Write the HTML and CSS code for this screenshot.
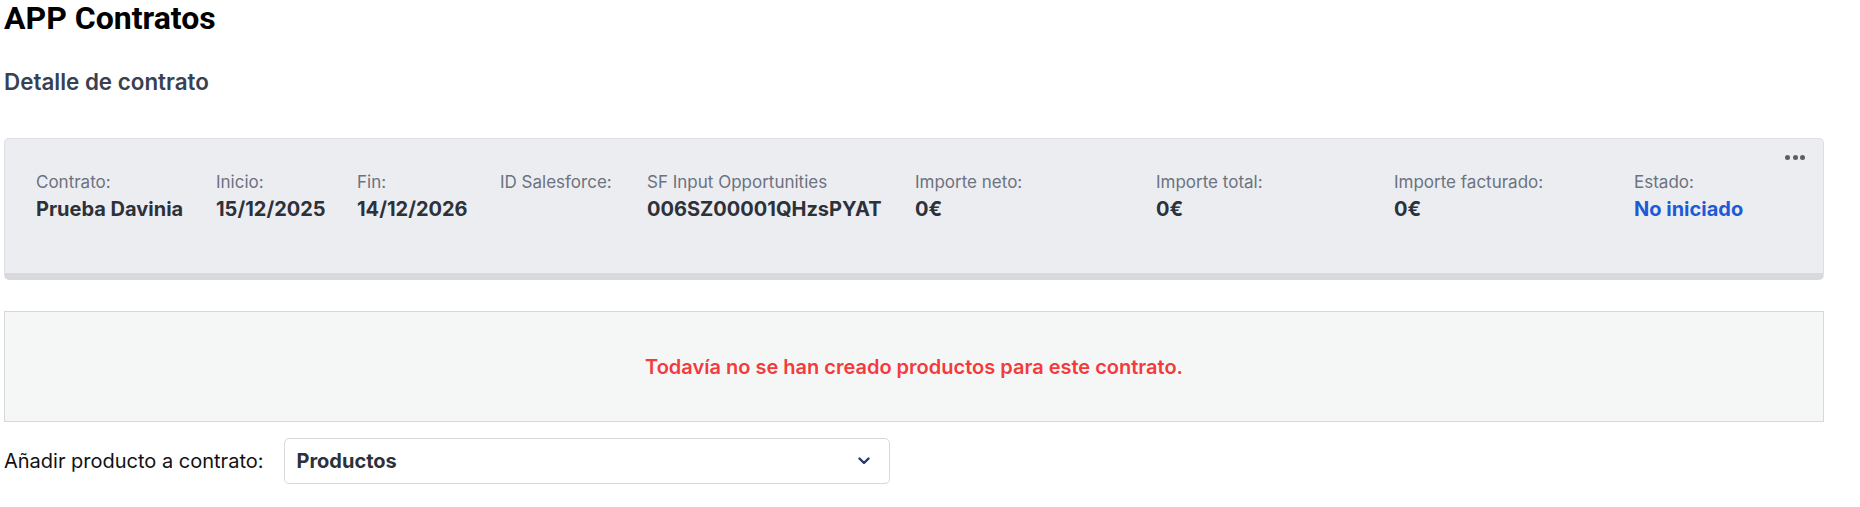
FILE: index.html
```html
<!DOCTYPE html>
<html lang="es">
<head>
<meta charset="utf-8">
<title>APP Contratos</title>
<link rel="stylesheet" href="styles.css">
</head>
<body>
<main class="page">
  <h1 class="app-title">APP Contratos</h1>
  <h2 class="section-title">Detalle de contrato</h2>

  <section class="contract-card">
    <div class="card-menu" aria-label="Más opciones">
      <span class="dot"></span><span class="dot"></span><span class="dot"></span>
    </div>
    <div class="fields">
      <div class="field">
        <div class="field-label">Contrato:</div>
        <div class="field-value">Prueba Davinia</div>
      </div>
      <div class="field">
        <div class="field-label">Inicio:</div>
        <div class="field-value">15/12/2025</div>
      </div>
      <div class="field">
        <div class="field-label">Fin:</div>
        <div class="field-value">14/12/2026</div>
      </div>
      <div class="field">
        <div class="field-label">ID Salesforce:</div>
        <div class="field-value"></div>
      </div>
      <div class="field">
        <div class="field-label">SF Input Opportunities</div>
        <div class="field-value">006SZ00001QHzsPYAT</div>
      </div>
      <div class="field">
        <div class="field-label">Importe neto:</div>
        <div class="field-value">0€</div>
      </div>
      <div class="field">
        <div class="field-label">Importe total:</div>
        <div class="field-value">0€</div>
      </div>
      <div class="field">
        <div class="field-label">Importe facturado:</div>
        <div class="field-value">0€</div>
      </div>
      <div class="field">
        <div class="field-label">Estado:</div>
        <div class="field-value status">No iniciado</div>
      </div>
    </div>
  </section>

  <section class="empty-box">
    <p class="empty-text">Todavía no se han creado productos para este contrato.</p>
  </section>

  <div class="add-row">
    <label class="add-label">Añadir producto a contrato:</label>
    <div class="select-box">
      <span class="select-text">Productos</span>
      <svg class="chevron" width="12" height="8" viewBox="0 0 12 8" aria-hidden="true">
        <path d="M1.5 1.5 L6 6 L10.5 1.5" fill="none" stroke="#2b3768" stroke-width="2.4" stroke-linecap="round" stroke-linejoin="round"/>
      </svg>
    </div>
  </div>
</main>
</body>
</html>
```

FILE: styles.css
```css
* {
  box-sizing: border-box;
}

html, body {
  margin: 0;
  padding: 0;
  background: #ffffff;
}

body {
  font-family: Inter, "Liberation Sans", Arial, sans-serif;
  color: #111111;
}

.page {
  padding: 0 36px 0 4px;
}

.app-title {
  margin: 0;
  font-family: Roboto, "Liberation Sans", Arial, sans-serif;
  font-weight: 700;
  font-size: 32px;
  line-height: 36px;
  color: #000000;
}

.section-title {
  margin: 33px 0 0 0;
  font-family: Inter, "Liberation Sans", Arial, sans-serif;
  font-weight: 600;
  font-size: 22.4px;
  line-height: 26px;
  color: #374151;
}

.contract-card {
  position: relative;
  margin-top: 43px;
  background: #ecedf1;
  border: 1px solid #dcdee3;
  border-bottom: 7px solid #d7d9df;
  border-radius: 5px;
  padding: 32px 31px 51px 31px;
}

.card-menu {
  position: absolute;
  top: 16px;
  right: 18px;
  display: flex;
  gap: 2.5px;
}

.dot {
  width: 5px;
  height: 5px;
  border-radius: 50%;
  background: #5b5f66;
}

.fields {
  display: grid;
  grid-template-columns: 145px 106px 108px 112px 233px 206px 203px 205px 1fr;
  column-gap: 35px;
}

.field-label {
  font-family: Inter, "Liberation Sans", Arial, sans-serif;
  font-weight: 400;
  font-size: 17px;
  line-height: 22px;
  color: #6b7280;
  white-space: nowrap;
}

.field-value {
  margin-top: 4px;
  font-family: Inter, "Liberation Sans", Arial, sans-serif;
  font-weight: 700;
  font-size: 20px;
  line-height: 25px;
  color: #2d3139;
  white-space: nowrap;
  min-height: 25px;
}

.field-value.status {
  color: #1f5ad6;
}

.empty-box {
  margin-top: 31px;
  height: 111px;
  background: #f5f7f7;
  border: 1px solid #d6d8de;
  display: flex;
  align-items: center;
  justify-content: center;
}

.empty-text {
  margin: 0;
  font-family: Inter, "Liberation Sans", Arial, sans-serif;
  font-weight: 600;
  font-size: 20px;
  line-height: 24px;
  color: #f53a3c;
}

.add-row {
  margin-top: 16px;
  display: flex;
  align-items: center;
  gap: 21px;
}

.add-label {
  font-family: Inter, "Liberation Sans", Arial, sans-serif;
  font-weight: 400;
  font-size: 20px;
  line-height: 24px;
  color: #111111;
}

.select-box {
  width: 606px;
  height: 46px;
  border: 1px solid #d6d8de;
  border-radius: 5px;
  background: #ffffff;
  display: flex;
  align-items: center;
  justify-content: space-between;
  padding: 0 19px 0 11px;
}

.select-text {
  font-family: Inter, "Liberation Sans", Arial, sans-serif;
  font-weight: 700;
  font-size: 20px;
  line-height: 24px;
  color: #2d3139;
}

.chevron {
  display: block;
}
```
